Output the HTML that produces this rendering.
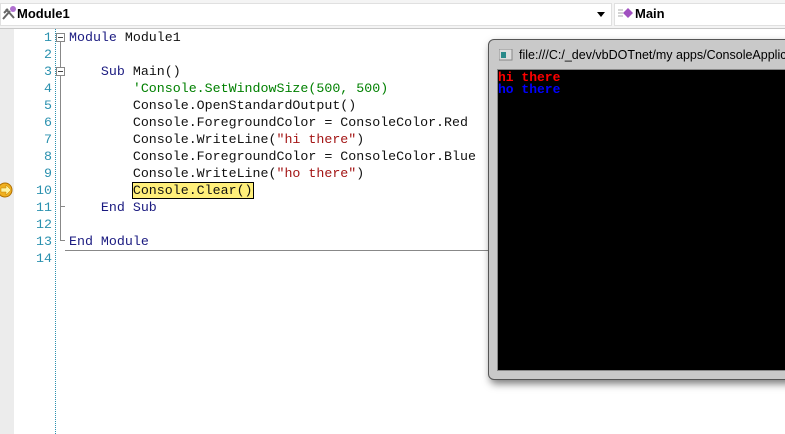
<!DOCTYPE html>
<html><head><meta charset="utf-8"><style>
*{margin:0;padding:0;box-sizing:border-box}
body{width:785px;height:434px;overflow:hidden;background:#fff;position:relative;font-family:"Liberation Sans",sans-serif}
.top{position:absolute;left:0;top:0;width:785px;height:29px;background:#f4f4f4;border-bottom:1px solid #c8c8c8}
.cb{position:absolute;top:3px;height:23px;background:#fff;border:1px solid #e0e0e0}
.lbl{position:absolute;font-weight:bold;font-size:13px;top:6px}
.margin{position:absolute;left:0;top:29px;width:14px;height:405px;background:#ececec}
.ln{position:absolute;left:14px;width:38px;text-align:right;color:#2b91af;font:13.3px "Liberation Mono",monospace}
.code{position:absolute;left:69px;font:13.3px "Liberation Mono",monospace;white-space:pre;color:#111}
.k{color:#1a1a80}.s{color:#a31515}.c{color:#008000}
.sep{position:absolute;left:55px;top:29px;height:405px;border-left:1px dotted #2b91af}
.box{position:absolute;left:56px;width:9px;height:9px;border:1px solid #888;background:#fff}
.box:after{content:"";position:absolute;left:1px;top:3px;width:5px;height:1px;background:#444}
.vl{position:absolute;left:60px;border-left:1px solid #888}
.win{position:absolute;left:488px;top:39px;width:310px;height:341px;background:#c9c9c9;border:1px solid #555;border-radius:6px;box-shadow:2px 4px 8px rgba(0,0,0,.5)}
.con{position:absolute;left:497px;top:69px;width:300px;height:302px;background:#000;border:1px solid #888}
.ct{position:absolute;left:498px;font:bold 13px "Liberation Mono",monospace}
</style></head><body>
<div class="top">
 <div class="cb" style="left:0;width:612px"></div>
 <div class="cb" style="left:614px;width:175px"></div>
 <svg style="position:absolute;left:1px;top:5px" width="16" height="16"><path d="M2 14L9 6M5 4l8 9M3 8l4-4" stroke="#666" stroke-width="2" fill="none"/><circle cx="12" cy="4" r="3" fill="#b070d0"/></svg>
 <div class="lbl" style="left:17px">Module1</div>
 <div style="position:absolute;left:597px;top:12px;border:4px solid transparent;border-top:5px solid #000"></div>
 <svg style="position:absolute;left:618px;top:7px" width="16" height="14"><path d="M0 3h5M0 6h5M0 9h5" stroke="#aaa"/><path d="M10 1l5 5-5 5-5-5z" fill="#a050c0"/></svg>
 <div class="lbl" style="left:635px">Main</div>
</div>
<div class="margin"></div>
<div class="sep"></div>
<svg style="position:absolute;left:-2px;top:182px" width="16" height="16"><circle cx="7" cy="8" r="7" fill="#f0b020" stroke="#b07000"/><path d="M3 6h5V3l5 5-5 5V10H3z" fill="#fff4a0" stroke="#c08000" stroke-width=".5"/></svg>
<div class="box" style="top:33px"></div>
<div class="vl" style="top:42px;height:26px"></div>
<div class="box" style="top:67px"></div>
<div class="vl" style="top:76px;height:130px"></div>
<div style="position:absolute;left:60px;top:206px;width:5px;border-top:1px solid #888"></div>
<div class="vl" style="top:76px;height:165px"></div>
<div style="position:absolute;left:60px;top:240px;width:5px;border-top:1px solid #888"></div>
<div style="position:absolute;left:65px;top:250px;width:425px;border-top:1px solid #888"></div>
<div class="ln" style="top:30px">1</div><div class="ln" style="top:47px">2</div><div class="ln" style="top:64px">3</div><div class="ln" style="top:81px">4</div><div class="ln" style="top:98px">5</div><div class="ln" style="top:115px">6</div><div class="ln" style="top:132px">7</div><div class="ln" style="top:149px">8</div><div class="ln" style="top:166px">9</div><div class="ln" style="top:183px">10</div><div class="ln" style="top:200px">11</div><div class="ln" style="top:217px">12</div><div class="ln" style="top:234px">13</div><div class="ln" style="top:251px">14</div>
<div class="code" style="top:30px"><span class="k">Module</span> Module1</div>
<div class="code" style="top:64px">    <span class="k">Sub</span> Main()</div>
<div class="code" style="top:81px">        <span class="c">'Console.SetWindowSize(500, 500)</span></div>
<div class="code" style="top:98px">        Console.OpenStandardOutput()</div>
<div class="code" style="top:115px">        Console.ForegroundColor = ConsoleColor.Red</div>
<div class="code" style="top:132px">        Console.WriteLine(<span class="s">"hi there"</span>)</div>
<div class="code" style="top:149px">        Console.ForegroundColor = ConsoleColor.Blue</div>
<div class="code" style="top:166px">        Console.WriteLine(<span class="s">"ho there"</span>)</div>
<div class="code" style="top:183px">        <span style="background:#ffef7a;outline:1px solid #000">Console.Clear()</span></div>
<div class="code" style="top:200px">    <span class="k">End Sub</span></div>
<div class="code" style="top:234px"><span class="k">End Module</span></div>
<div class="win"></div>
<svg style="position:absolute;left:499px;top:49px" width="14" height="12"><rect x="0" y="0" width="13" height="11" fill="#ddd" stroke="#888"/><rect x="2" y="3" width="5" height="6" fill="#2a8a8a"/></svg>
<div style="position:absolute;left:519px;top:48px;font-size:12.5px;color:#000;white-space:nowrap">file:///C:/_dev/vbDOTnet/my apps/ConsoleApplica</div>
<div class="con"></div>
<div class="ct" style="top:70px;color:#f00">hi there</div>
<div class="ct" style="top:82px;color:#00f">ho there</div>
</body></html>
